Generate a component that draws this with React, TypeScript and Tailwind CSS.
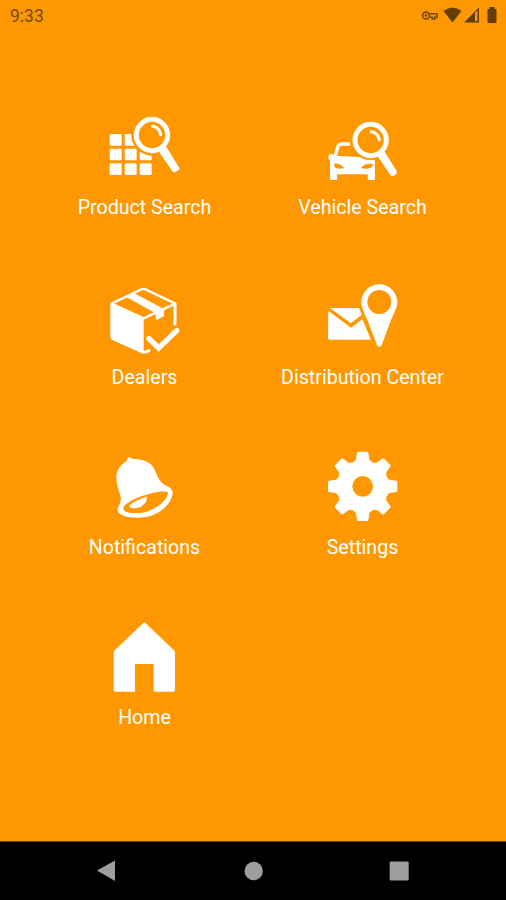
import type { ReactNode } from "react";

function Icon({ x, children }: { x: number; children: ReactNode }) {
  return (
    <svg viewBox={`${x} 9 240 240`} className="h-20 w-20 fill-white" aria-hidden="true">
      {children}
    </svg>
  );
}

function ProductIcon() {
  return (
    <Icon x={135}>
      {[87, 131, 175].map((y) =>
        [149, 194, 239].map((x) => <rect key={`${x}-${y}`} x={x} y={y} width="36" height="35" rx="4" />),
      )}
      <circle cx="276" cy="90" r="62" fill="#ff9800" />
      <path d="M289 125 L345 210" stroke="#ff9800" strokeWidth="28" />
      <circle cx="276" cy="90" r="47" fill="none" stroke="#fff" strokeWidth="15" />
      <path d="M278 64 Q298 67 302 89" fill="none" stroke="#fff" strokeWidth="9" strokeLinecap="round" />
      <path d="M295 137 L318 124 L356 186 Q361 193 355 196 L346 201 Q341 204 337 199 Z" />
    </Icon>
  );
}

function VehicleIcon() {
  return (
    <Icon x={129}>
      <path d="M211 117 H187 Q176 117 173 127 L164 158" fill="none" stroke="#fff" strokeWidth="10" />
      <path d="M145 153 Q147 146 156 146 L163 152 L285 158 V223 Q285 225 282 225 H266 Q263 225 263 222 V208 H171 V222 Q171 225 168 225 H153 Q150 225 150 222 V166 Q144 163 145 153 Z" />
      <circle cx="271" cy="104" r="61" fill="#ff9800" />
      <path d="M162 176 Q180 172 192 189 Q180 193 168 189 Q162 186 162 176 Z M280 178 Q257 172 243 189 Q257 193 271 189 Q278 187 280 178 Z" fill="#ff9800" />
      <path d="M288 152 L304 176" stroke="#ff9800" strokeWidth="12" />
      <circle cx="272" cy="105" r="47" fill="none" stroke="#fff" strokeWidth="15" />
      <path d="M274 80 Q294 83 298 104" fill="none" stroke="#fff" strokeWidth="9" strokeLinecap="round" />
      <path d="M291 151 L312 137 L350 198 Q354 204 348 208 L340 213 Q335 216 331 210 Z" />
    </Icon>
  );
}

function DealersIcon() {
  return (
    <Icon x={135}>
      <path d="M151 87 L251 132 V234 Q246 236 239 232 L157 195 Q151 192 151 186 Z" />
      <path d="M154 86 L244 43 Q250 40 256 43 L346 86 L251 130 Z" fill="none" stroke="#fff" strokeWidth="7" strokeLinejoin="round" />
      <path d="M195 64 L220 53 L312 102 V120 Q312 124 307 126 L292 134 Q287 136 287 130 V115 Z" />
      <path d="M345 87 V147" fill="none" stroke="#fff" strokeWidth="9" strokeLinecap="round" />
      <path d="M249 231 Q256 233 267 227" fill="none" stroke="#fff" strokeWidth="9" strokeLinecap="round" />
      <path d="M267 191 L296 219 L350 167" fill="none" stroke="#fff" strokeWidth="16" strokeLinecap="round" />
    </Icon>
  );
}

function DistributionIcon() {
  return (
    <Icon x={159}>
      <path d="M180 99 H267 L275 119 L243 145 Z" />
      <path d="M175 107 L243 158 L277 132 L303 194 H180 Q174 194 174 188 Z" />
      <path fillRule="evenodd" d="M328 28 C298 28 274 52 274 82 C274 98 284 117 292 135 L321 210 Q323 215 328 215 Q333 215 335 210 L363 135 C371 117 382 98 382 82 C382 52 358 28 328 28 Z M328 45 A36 36 0 1 1 327.9 45 Z" />
    </Icon>
  );
}

function BellIcon() {
  return (
    <Icon x={135}>
      <path d="M204 37 Q209 33 215 41 L221 42 C244 42 269 49 280 67 C293 88 293 111 320 123 C333 128 341 137 337 150 C331 178 304 202 274 212 C238 222 201 219 184 209 Q171 201 173 192 C175 181 187 170 181 152 C173 126 163 99 174 75 C180 62 195 52 201 46 Z" />
      <path d="M324 142 C312 135 276 143 246 153 C214 165 191 178 190 190 C190 207 223 205 247 203 C282 197 324 168 324 142 Z" fill="#ff9800" />
      <path d="M207 182 Q228 164 260 155 C263 169 251 183 232 189 Q214 194 207 182 Z" />
    </Icon>
  );
}

function SettingsIcon() {
  return (
    <Icon x={129}>
      <circle cx="248" cy="124" r="77" />
      {[0, 45, 90, 135, 180, 225, 270, 315].map((angle) => (
        <path
          key={angle}
          transform={`rotate(${angle} 248 124)`}
          d="M219 51 Q227 48 228 43 L231 23 Q232 20 235 20 H261 Q264 20 265 23 L268 43 Q269 48 277 51 L271 70 H225 Z"
        />
      ))}
      <circle cx="248" cy="124" r="31" fill="#ff9800" />
    </Icon>
  );
}

function HomeIcon() {
  return (
    <Icon x={135}>
      <path d="M253 21 L342 106 Q345 109 345 114 V225 Q345 230 340 230 H281 V147 H225 V230 H166 Q161 230 161 225 V114 Q161 109 164 106 Z" />
    </Icon>
  );
}

const items = [
  { label: "Product Search", icon: <ProductIcon /> },
  { label: "Vehicle Search", icon: <VehicleIcon /> },
  { label: "Dealers", icon: <DealersIcon /> },
  { label: "Distribution Center", icon: <DistributionIcon /> },
  { label: "Notifications", icon: <BellIcon /> },
  { label: "Settings", icon: <SettingsIcon /> },
  { label: "Home", icon: <HomeIcon /> },
];

export default function App() {
  return (
    <div className="flex h-[900px] w-[506px] flex-col overflow-hidden bg-[#ff9800] font-['Roboto',sans-serif]">
      <header className="flex h-8 shrink-0 items-center justify-between pl-2.5 text-[#754600]">
        <span className="text-[17.5px] leading-8">9:33</span>
        <svg viewBox="0 0 96 32" className="h-8 w-24 fill-[#653d00]" aria-hidden="true">
          <path d="M19.5 13.8 H27 V17.2 H24.8 V19 H22.2 V17.2 H19.5" fill="none" stroke="#754600" strokeWidth="1.5" />
          <circle cx="16" cy="15.5" r="3.4" fill="#ff9800" stroke="#754600" strokeWidth="1.6" />
          <circle cx="16" cy="15.5" r="1.2" />
          <path d="M33.5 11 Q42.5 4 51.5 11 L42.5 22.5 Z" />
          <path fillRule="evenodd" d="M69 7.5 V22.5 H54 Z M65 13 V21 H67.5 V10.5 Z" />
          <path d="M79.5 7 H84.5 V9 H86.5 V23 H77.5 V9 H79.5 Z" />
        </svg>
      </header>
      <main className="grid flex-1 auto-rows-[170px] grid-cols-[218px_218px] content-start justify-center pt-[76px] pl-px">
        {items.map(({ label, icon }) => (
          <button key={label} type="button" className="flex flex-col items-center justify-start text-white">
            {icon}
            <span className="mt-2 text-[19.6px] leading-6 whitespace-nowrap">{label}</span>
          </button>
        ))}
      </main>
      <nav className="flex h-[59px] shrink-0 items-center border-t border-[#734400] bg-black">
        <svg viewBox="0 0 506 58" className="h-[58px] w-full fill-[#9e9e9e]" aria-hidden="true">
          <path d="M97 28.5 L115 18.5 V39 Z" />
          <circle cx="253.7" cy="29" r="9.2" />
          <rect x="389.7" y="19.5" width="19" height="19" rx="1.2" />
        </svg>
      </nav>
    </div>
  );
}
